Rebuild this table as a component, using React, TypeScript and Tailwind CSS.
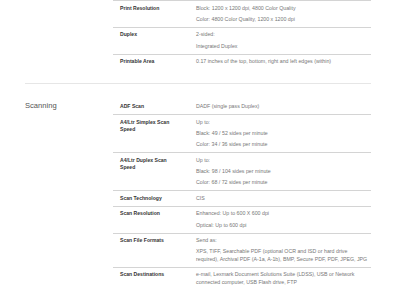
import React from 'react';

type Spec = { label: string[]; values: string[][] };

const printRows: Spec[] = [
  { label: ['Print Resolution'], values: [['Block: 1200 x 1200 dpi, 4800 Color Quality'], ['Color: 4800 Color Quality, 1200 x 1200 dpi']] },
  { label: ['Duplex'], values: [['2-sided:'], ['Integrated Duplex']] },
  { label: ['Printable Area'], values: [['0.17 inches of the top, bottom, right and left edges (within)']] },
];

const scanRows: Spec[] = [
  { label: ['ADF Scan'], values: [['DADF (single pass Duplex)']] },
  { label: ['A4/Ltr Simplex Scan', 'Speed'], values: [['Up to:'], ['Black: 49 / 52 sides per minute'], ['Color: 34 / 36 sides per minute']] },
  { label: ['A4/Ltr Duplex Scan', 'Speed'], values: [['Up to:'], ['Black: 98 / 104 sides per minute'], ['Color: 68 / 72 sides per minute']] },
  { label: ['Scan Technology'], values: [['CIS']] },
  { label: ['Scan Resolution'], values: [['Enhanced: Up to 600 X 600 dpi'], ['Optical: Up to 600 dpi']] },
  {
    label: ['Scan File Formats'],
    values: [
      ['Send as:'],
      ['XPS, TIFF, Searchable PDF (optional OCR and ISD or hard drive', 'required), Archival PDF (A-1a, A-1b), BMP, Secure PDF, PDF, JPEG, JPG'],
    ],
  },
  {
    label: ['Scan Destinations'],
    values: [['e-mail, Lexmark Document Solutions Suite (LDSS), USB or Network', 'connected computer, USB Flash drive, FTP']],
  },
];

const Row = ({ spec, first }: { spec: Spec; first?: boolean }) => (
  <div className={`flex pt-[3.5px] pb-[3.5px] ${first ? '' : 'border-t border-[#d4d4d4]'}`}>
    <div className="w-[83px] shrink-0 pl-[7px] text-[5.1px] font-bold leading-[7.5px] text-[#333]">
      {spec.label.map((l) => (
        <div key={l}>{l}</div>
      ))}
    </div>
    <div className="w-[171px] text-[5.25px] leading-[7.5px] text-[#777] whitespace-nowrap">
      {spec.values.map((lines, i) => (
        <div key={i} className={i < spec.values.length - 1 ? 'mb-[3.8px]' : ''}>
          {lines.map((l) => (
            <div key={l}>{l}</div>
          ))}
        </div>
      ))}
    </div>
  </div>
);

export default function App() {
  return (
    <div className="w-[400px] h-[290px] overflow-hidden bg-white" style={{ fontFamily: '"Liberation Sans", Arial, sans-serif' }}>
      <div className="ml-[113px] w-[258px]">
        {printRows.map((r) => (
          <Row key={r.label[0]} spec={r} />
        ))}
      </div>

      <div className="ml-[25px] w-[346px] mt-[13.5px] border-t border-[#e6e6e6]" />

      <div className="flex ml-[25px] mt-[16px]">
        <div className="w-[88px] shrink-0 pt-[1px] text-[7.6px] leading-[10px] text-[#555]">Scanning</div>
        <div className="w-[258px]">
          {scanRows.map((r, i) => (
            <Row key={r.label[0]} spec={r} first={i === 0} />
          ))}
        </div>
      </div>
    </div>
  );
}
